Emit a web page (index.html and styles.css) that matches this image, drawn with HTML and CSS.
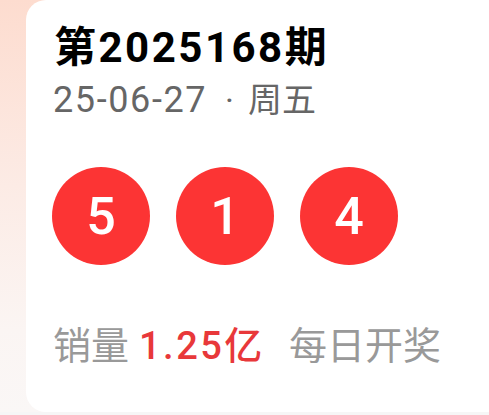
FILE: index.html
```
<!DOCTYPE html>
<html lang="zh-CN">
<head>
<meta charset="utf-8">
<link rel="stylesheet" href="styles.css">
</head>
<body>
<div class="page">
  <div class="card">
    <div class="title">第2025168期</div>
    <div class="date"><span class="num">25-06-27</span><span class="dot">·</span><span class="week">周五</span></div>
    <div class="balls">
      <div class="ball">5</div>
      <div class="ball">1</div>
      <div class="ball">4</div>
    </div>
    <div class="meta">
      <span class="label">销量</span>
      <span class="amount">1.25亿</span>
      <span class="freq">每日开奖</span>
    </div>
  </div>
</div>
</body>
</html>
```
FILE: styles.css
```
* { box-sizing: border-box; }
html, body { margin: 0; padding: 0; }
body {
  width: 489px;
  height: 415px;
  overflow: hidden;
  background: #f6f6f6;
  font-family: Roboto, "Noto Sans CJK SC", sans-serif;
}
.page {
  height: 412px;
  background: linear-gradient(180deg, #fddccf 0%, #fcebe5 45%, #fbf5f3 80%, #faf7f6 100%);
  padding-left: 26px;
  overflow: hidden;
}
.card {
  width: 520px;
  height: 412px;
  background: #fff;
  border-radius: 20px;
  padding: 22px 26px 0 26px;
  display: flex;
  flex-direction: column;
}
.title {
  font-size: 42px;
  font-weight: 700;
  color: #000;
  line-height: 52px;
  letter-spacing: 2.5px;
  padding-left: 2px;
}
.date {
  font-size: 34px;
  color: #666;
  line-height: 44px;
  margin-top: 4px;
  padding-left: 1px;
  display: flex;
  align-items: baseline;
}
.date .num {
  font-size: 36px;
  letter-spacing: 1.6px;
}
.date .dot {
  margin: 0 14px 0 18px;
}
.balls {
  display: flex;
  gap: 26px;
  margin-top: 45px;
}
.ball {
  width: 98px;
  height: 98px;
  border-radius: 50%;
  background: #fc3434;
  color: #fff;
  font-size: 52px;
  font-weight: 500;
  display: flex;
  align-items: center;
  justify-content: center;
}
.meta {
  margin-top: 56px;
  font-size: 38px;
  line-height: 50px;
  color: #999;
  display: flex;
  align-items: baseline;
  padding-left: 1px;
}
.amount {
  color: #e8383a;
  margin-left: 10px;
  font-weight: 500;
  letter-spacing: 2.5px;
}
.freq {
  margin-left: 24px;
}
```
